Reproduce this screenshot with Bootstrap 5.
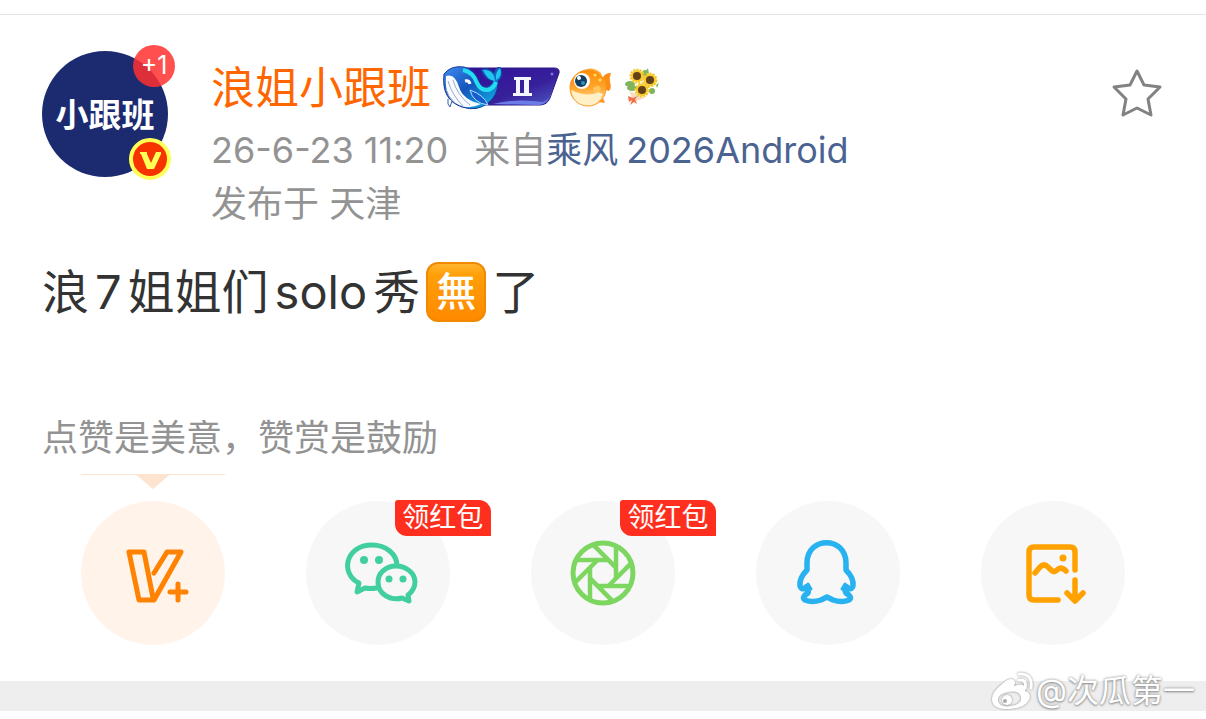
<!DOCTYPE html>
<html lang="zh-CN">
<head>
<meta charset="utf-8">
<meta name="viewport" content="width=device-width, initial-scale=1">
<title>浪姐小跟班</title>
<link href="https://cdn.jsdelivr.net/npm/bootstrap@5.3.0/dist/css/bootstrap.min.css" rel="stylesheet">
<style>
body{font-family:Inter,"Noto Sans CJK SC",sans-serif;color:#333;background:#fff}
svg{display:block;overflow:visible}
a{text-decoration:none}
.post{margin-top:14px;border-top:1px solid #e3e3e3;padding:36px 42px 0}
.avatar{width:126px;height:126px;padding-top:4px;background:#1c2b70;color:#fff;font-size:33px;font-weight:700}
.avatar-wrap{margin-right:43px}
.plus-one{top:-6px;right:-7px;width:42px;height:42px;font-size:25px;background:rgba(255,48,48,.85);color:#fff}
.verified{right:-3px;bottom:-3px}
.user-name{font-size:44px;line-height:52px;color:#f60}
.name-row{padding-top:11px;gap:12px;margin-bottom:9px}
.whale-badge{margin-right:-4px}
.meta{font-size:36px;line-height:54px;color:#939393;column-gap:26px}
.meta a{color:#4a6391}
.star-btn{margin:17px 2px 0 0}
.message{font-size:47px;line-height:60px;margin-top:31px;gap:6px}
.wu{width:60px;height:60px;border-radius:12px;font-size:40px;line-height:56px;color:#fff;font-weight:500;background:linear-gradient(#ffb52e,#ff9f08 20%,#ff8a00);border:2px solid #f18a00}
.tip{font-size:36px;line-height:54px;color:#939393;margin-top:89px;padding-bottom:9px}
.share{padding:0 40px 36px}
.share-item{width:144px;height:144px;margin-top:27px;background:#f7f7f7}
.share-item.reward{background:#fff3ea}
.pointer-mark{top:-27px;left:0}
.packet{left:89px;top:-1px;width:96px;height:36px;font-size:27px;line-height:36px;color:#fff;background:#ff2f20;border-radius:3px 12px 0 12px}
.foot{height:30px;background:#eee}
.watermark{right:11px;bottom:-2px;font-size:32px;line-height:44px;color:#fff;text-shadow:0 0 3px #888,0 1px 2px #999}
.weibo-mark{filter:drop-shadow(0 0 1px #888)}
</style>
</head>
<body>
<main>
<article class="post">
  <header class="d-flex align-items-start">
    <div class="avatar-wrap position-relative flex-shrink-0">
      <div class="avatar rounded-circle d-flex align-items-center justify-content-center">小跟班</div>
      <span class="plus-one position-absolute rounded-circle d-flex align-items-center justify-content-center">+1</span>
      <svg class="verified position-absolute" width="42" height="42" viewBox="0 0 42 42"><circle cx="21" cy="21" r="19" fill="#f73400" stroke="#ffff55" stroke-width="4"/><path d="M11 14h7v2l4 9 5-11h5v2l-7 15h-7l-6-15h-1z" fill="#ffff55"/></svg>
    </div>
    <div class="flex-grow-1">
      <div class="name-row d-flex align-items-center">
        <a href="#" class="user-name">浪姐小跟班</a>
        <svg class="whale-badge" width="118" height="44" viewBox="0 0 118 44">
          <defs><linearGradient id="plate" x2="1" y2="1"><stop stop-color="#30119b"/><stop offset=".6" stop-color="#38209a"/><stop offset="1" stop-color="#4d58c5"/></linearGradient><linearGradient id="whale" x2="1" y2="1"><stop stop-color="#3e8df0"/><stop offset=".45" stop-color="#1454bd"/><stop offset="1" stop-color="#10c5ed"/></linearGradient></defs>
          <path d="M24 2h87q6 0 5 5l-9 25q-3 7-10 7H22z" fill="url(#plate)" stroke="#2a1b86"/>
          <path d="M50 38q24-6 50-2 7-2 10-14-4 17-15 17z" fill="#6c7ce6"/><circle cx="109" cy="8" r="1.500" fill="#7a72e8"/>
          <path d="M71 11h17v3h-2v13h3v3H70v-3h3V14h-2zM77 14v13h4V14z" fill="#f4f6ff" fill-rule="evenodd"/>
          <path d="M1 8Q8-1 21 1q10 2 14 13 3 7 7 7 6 0 8-6-8-1-12-11 6-4 13 3 2-7 7-5 3 8-3 13 0 15-10 22-11 9-26 4Q-2 34 1 8" fill="url(#whale)" stroke="#173b9b"/>
          <path d="M3 10q9-3 13 11 4 13 22 17-12 6-22 1Q1 33 3 10" fill="#f8fbff"/>
          <path d="M5 15q4 14 15 25M10 14q4 15 17 25M3 23q2 8 9 14" fill="none" stroke="#9aa9c5"/>
          <path d="M27 24q3 13 18 15-4-10-18-15" fill="#185dcf" stroke="#a7e2ff"/>
          <path d="M20 4q10 2 14 13 4 8 11 7 6-2 8-8" fill="none" stroke="#25ddf1" stroke-width="4"/>
          <path d="M40 4q8-1 11 6l1 5q-8-1-12-11M57 2q3 8-4 12-1-8 4-12" fill="#21c6ec"/>
          <path d="M22 15q4-1 5 3" fill="none" stroke="#fff" stroke-width="3"/><path d="M5 33q-1 6 2 8l2-6" fill="#fff" stroke="#355cae"/>
        </svg>
        <svg width="44" height="42" viewBox="0 0 44 42">
          <defs><linearGradient id="fish" x2="0" y2="1"><stop stop-color="#ff8d08"/><stop offset=".5" stop-color="#ffa52b"/><stop offset="1" stop-color="#fff1c5"/></linearGradient></defs>
          <path d="M32 13q4-8 10-7-2 5-1 9 2 6-1 9-5-1-8-5" fill="#ff8c12"/><path d="M13 4q10-6 19 2l2 8z" fill="#ffad32"/>
          <ellipse cx="19" cy="21" rx="18" ry="18" fill="url(#fish)" stroke="#f99827"/>
          <path d="M2 23q17 8 27 2l5 2q-5 12-17 11Q5 37 2 23" fill="#fff0c8"/>
          <circle cx="13" cy="14" r="8" fill="#fff"/><circle cx="12" cy="14" r="6" fill="#123e62"/><circle cx="10" cy="11" r="2" fill="#fff"/><circle cx="14" cy="16" r="2" fill="#2e91c0"/>
          <path d="M24 21q5-5 8 0-1 6-7 4z" fill="#ffc45b"/><path d="M29 35l7 1-2-5M1 16q3-5 4 0-1 4-4 2" fill="#ff9428"/><circle cx="26" cy="8" r="1.500" fill="#ffe066"/><circle cx="31" cy="13" r="1.500" fill="#ffe066"/>
        </svg>
        <svg width="36" height="40" viewBox="0 0 36 40">
          <g fill="#7fb45c"><ellipse cx="5" cy="16" rx="5" ry="3"/><ellipse cx="20" cy="6" rx="3" ry="4"/><ellipse cx="7" cy="20" rx="5" ry="3"/><ellipse cx="27" cy="23" rx="3" ry="3"/><path d="M20 4l3-4 1 6M31 17l3-2-2 5"/></g>
          <path d="M4 23l16 7-11 4z" fill="#f6ddbd"/>
          <g fill="#f6c92d" stroke="#f6c92d" stroke-width="3" stroke-dasharray="2 1"><circle cx="12" cy="8" r="6"/><circle cx="25" cy="12" r="6"/><circle cx="17" cy="22" r="6"/></g>
          <g fill="#634016"><circle cx="12" cy="8" r="4"/><circle cx="25" cy="12" r="4"/><circle cx="17" cy="22" r="4"/></g>
          <path d="M8 30l-5-2 1 6 3-2-2 5 4-3 3 2-2-5 3-3z" fill="#f46d44"/>
        </svg>
      </div>
      <div class="meta d-flex flex-wrap"><time>26-6-23 11:20</time><span>来自<a href="#">乘风<span class="ms-2">2026Android</span></a></span></div>
      <div class="meta">发布于 天津</div>
    </div>
    <button class="star-btn btn p-0 border-0" aria-label="收藏"><svg width="50" height="50" viewBox="0 0 50 50"><path d="M25 3l7 14 16 2-12 12 3 16-14-7-14 7 3-16L2 19l16-2z" fill="none" stroke="#828282" stroke-width="3" stroke-linejoin="round"/></svg></button>
  </header>
  <div class="message d-flex align-items-center"><span>浪</span><span>7</span><span>姐姐们</span><span>solo</span><span>秀</span><span class="wu text-center">無</span><span>了</span></div>
  <p class="tip mb-0">点赞是美意，赞赏是鼓励</p>
</article>
<nav class="share row row-cols-5 g-0 justify-content-center" aria-label="分享">
  <div class="col d-flex justify-content-center"><a href="#" aria-label="赞赏" class="share-item reward rounded-circle position-relative d-block">
    <svg class="pointer-mark position-absolute" width="144" height="15" viewBox="0 0 144 15"><path d="M0 0h144v1H90q-2 0-4 2L72 15 58 3q-2-2-4-2H0z" fill="#fde4d0"/></svg>
    <svg width="144" height="144" viewBox="0 0 144 144" fill="none" stroke="#ff8200" stroke-width="5" stroke-linecap="round" stroke-linejoin="round"><path d="M73 72l13-21h14L73 99H58L48 51h15l9 46M97 83v16M89 91h16"/></svg></a></div>
  <div class="col d-flex justify-content-center"><a href="#" aria-label="微信" class="share-item rounded-circle position-relative d-block">
    <svg width="144" height="144" viewBox="0 0 144 144" fill="none" stroke="#42cfa0" stroke-width="5" stroke-linejoin="round"><path d="M71 87q-7 1-12 0l-8 4 2-9C34 73 39 44 66 44c14 0 25 9 25 21"/><path d="M103 100l-7-3C84 100 72 93 72 81c0-9 8-16 18-16s19 7 19 16c0 5-2 9-7 13z"/><g fill="#42cfa0" stroke="none"><circle cx="58" cy="59" r="4"/><circle cx="73" cy="59" r="4"/><circle cx="83" cy="78" r="3.500"/><circle cx="97" cy="78" r="3.500"/></g></svg><span class="packet position-absolute text-center">领红包</span></a></div>
  <div class="col d-flex justify-content-center"><a href="#" aria-label="朋友圈" class="share-item rounded-circle position-relative d-block">
    <svg width="144" height="144" viewBox="0 0 144 144" fill="none" stroke="#7cd660" stroke-width="4.500"><circle cx="72" cy="72" r="30" stroke-width="5"/><path d="M45 59h32"/><path d="M45 59h32" transform="rotate(45 72 72)"/><path d="M45 59h32" transform="rotate(90 72 72)"/><path d="M45 59h32" transform="rotate(135 72 72)"/><path d="M45 59h32" transform="rotate(180 72 72)"/><path d="M45 59h32" transform="rotate(225 72 72)"/><path d="M45 59h32" transform="rotate(270 72 72)"/><path d="M45 59h32" transform="rotate(315 72 72)"/></svg><span class="packet position-absolute text-center">领红包</span></a></div>
  <div class="col d-flex justify-content-center"><a href="#" aria-label="QQ" class="share-item rounded-circle position-relative d-block">
    <svg width="144" height="144" viewBox="0 0 144 144" fill="none" stroke="#28b3f0" stroke-width="5.500" stroke-linejoin="round" stroke-linecap="round"><path d="M51 69V62C51 35 90 35 90 62v7q8 8 7 16-2 5-6 1-3 3-1 6 7 4 3 7-7 3-16 0l-6-3-6 3q-9 3-16 0-4-3 3-7 1-3-2-6-4 4-6-1-1-8 7-16z"/><path d="M52 83l-4 5 7 0zM89 83l4 5-7 0z" fill="#28b3f0" stroke-width="3"/></svg></a></div>
  <div class="col d-flex justify-content-center"><a href="#" aria-label="保存图片" class="share-item rounded-circle position-relative d-block">
    <svg width="144" height="144" viewBox="0 0 144 144" fill="none" stroke="#ffa200" stroke-width="5.500" stroke-linecap="round" stroke-linejoin="round"><path d="M77 99H53q-5 0-5-5V51q0-5 5-5h36q5 0 5 5v18M54 72l5-6q4-4 8 0l3 3q3 3 6 0 4-4 9 1M94 79v21M86 92l8 8 8-8"/><circle cx="82" cy="57" r="3.500" fill="#ffa200" stroke="none"/></svg></a></div>
</nav>
</main>
<footer class="foot position-relative"><div class="watermark position-absolute d-flex align-items-center">
<svg class="weibo-mark" width="46" height="40" viewBox="0 0 46 40"><path fill-rule="evenodd" d="M12 13q8-7 12-4 2 2 0 6 13-4 11 5 7 2 4 9-4 8-19 9Q3 39 2 29q-1-7 10-16m-4 17q2 7 13 5 11-2 10-9-2-7-13-5Q7 23 8 30" fill="#fff"/><circle cx="17" cy="29" r="5" fill="#fff"/><circle cx="15" cy="30" r="2" fill="#aaa"/><path d="M29 9q8-1 6 8M29 3q14-1 12 14" fill="none" stroke="#fff" stroke-width="3" stroke-linecap="round"/></svg><span>@次瓜第一</span></div></footer>
<script src="https://cdn.jsdelivr.net/npm/bootstrap@5.3.0/dist/js/bootstrap.bundle.min.js"></script>
</body>
</html>
